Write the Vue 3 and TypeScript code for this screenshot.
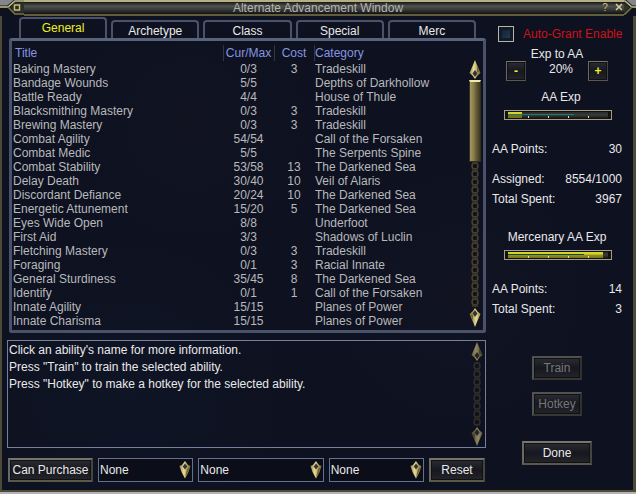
<script setup lang="ts">
import { ref } from 'vue'

interface Ability {
  title: string
  rank: string
  cost: string
  category: string
}

const tabs = ['General', 'Archetype', 'Class', 'Special', 'Merc']
const activeTab = ref('General')
const autoGrant = ref(false)
const percent = ref(20)
const filters = [
  { label: 'Ability type', size: 'narrow' },
  { label: 'Expansion', size: 'wide' },
  { label: 'Category', size: 'narrow' },
]

const abilities: Ability[] = [
  ['Baking Mastery', '0/3', '3', 'Tradeskill'],
  ['Bandage Wounds', '5/5', '', 'Depths of Darkhollow'],
  ['Battle Ready', '4/4', '', 'House of Thule'],
  ['Blacksmithing Mastery', '0/3', '3', 'Tradeskill'],
  ['Brewing Mastery', '0/3', '3', 'Tradeskill'],
  ['Combat Agility', '54/54', '', 'Call of the Forsaken'],
  ['Combat Medic', '5/5', '', 'The Serpents Spine'],
  ['Combat Stability', '53/58', '13', 'The Darkened Sea'],
  ['Delay Death', '30/40', '10', 'Veil of Alaris'],
  ['Discordant Defiance', '20/24', '10', 'The Darkened Sea'],
  ['Energetic Attunement', '15/20', '5', 'The Darkened Sea'],
  ['Eyes Wide Open', '8/8', '', 'Underfoot'],
  ['First Aid', '3/3', '', 'Shadows of Luclin'],
  ['Fletching Mastery', '0/3', '3', 'Tradeskill'],
  ['Foraging', '0/1', '3', 'Racial Innate'],
  ['General Sturdiness', '35/45', '8', 'The Darkened Sea'],
  ['Identify', '0/1', '1', 'Call of the Forsaken'],
  ['Innate Agility', '15/15', '', 'Planes of Power'],
  ['Innate Charisma', '15/15', '', 'Planes of Power'],
].map(([title, rank, cost, category]) => ({ title, rank, cost, category }))

const playerExp = { fill: 14, sub: 66 }
const mercExp = { fill: 95, sub: 76 }

function step(delta: number) {
  percent.value = Math.min(100, Math.max(0, percent.value + delta))
}
</script>

<template>
  <div class="window">
    <svg class="defs" width="0" height="0" aria-hidden="true">
      <defs>
        <linearGradient id="gold" x1="0" x2="1" y1="0" y2="0">
          <stop offset="0" stop-color="#9a8b4c" />
          <stop offset="0.4" stop-color="#e8dc9c" />
          <stop offset="0.6" stop-color="#c3b26a" />
          <stop offset="1" stop-color="#75683a" />
        </linearGradient>
        <pattern id="chain" width="12" height="8" patternUnits="userSpaceOnUse">
          <circle cx="6" cy="4" r="3" fill="none" stroke="#4b432b" stroke-width="1.4" />
          <path d="M3 0l2 1M9 0l-2 1M3 8l2-1M9 8l-2-1" stroke="#39331f" stroke-width="1.2" />
        </pattern>
        <symbol id="spear" viewBox="0 0 12 20">
          <path d="M6 0L8.500 5L12 13L9 17L6 20L3 17L0 13L3.500 5Z" fill="#15130c" />
          <path d="M6 0L8 5L11.500 13L8.500 15.500L6 19L3.500 15.500L0.500 13L4 5Z" fill="url(#gold)" />
          <path d="M6 10L8.500 13.500L6 17L3.500 13.500Z" fill="#33343a" />
          <path d="M8 6L10.500 12.500L8 12Z" fill="#6c6035" />
        </symbol>
        <symbol id="drop" viewBox="0 0 12 18">
          <path d="M6 0L9 4L12 5L10 11L6 18L2 11L0 5L3 4Z" fill="#15130c" />
          <path d="M6 0L9 4L11.500 5L9.500 11L6 17.500L2.500 11L0.500 5L3 4Z" fill="url(#gold)" />
          <path d="M6 2.500L8.300 5.500L6 8.500L3.700 5.500Z" fill="#33343a" />
          <path d="M8 8L10.500 6L9 11L6 16.500Z" fill="#6c6035" />
        </symbol>
      </defs>
    </svg>

    <header class="titlebar">
      <svg class="corner" width="24" height="16" viewBox="0 0 24 16" aria-hidden="true">
        <path d="M0 0H15L7 6H0Z" fill="#85868a" />
        <path d="M8 7L15 0H24V15H15Z" fill="#2d302c" />
        <path d="M0 7H8L15 1H24M8 7L15 14H24" fill="none" stroke="#16170f" stroke-width="3" />
        <path d="M0 7H8L15 1H24" fill="none" stroke="#c3be90" stroke-width="1.6" />
        <path d="M8 7L15 14H24" fill="none" stroke="#77744f" stroke-width="1.6" />
        <path d="M14.500 5H19.500V10H14.500Z" fill="#2a291c" stroke="#c5bb7c" stroke-width="1.500" />
      </svg>
      <h1>Alternate Advancement Window</h1>
      <div class="title-tools">
        <button type="button" aria-label="Help">?</button>
        <button type="button" aria-label="Close">
          <svg width="8" height="8" viewBox="0 0 8 8" aria-hidden="true">
            <path d="M1 1L7 7M7 1L1 7" stroke="#d6cd92" stroke-width="1.6" />
          </svg>
        </button>
      </div>
      <svg class="corner" width="12" height="16" viewBox="0 0 12 16" aria-hidden="true">
        <path d="M2 0H12V6H8Z" fill="#85868a" />
        <path d="M0 0H1L8 7L0 15Z" fill="#2d302c" />
        <path d="M0 1H1L8 7H12M8 7L1 14H0" fill="none" stroke="#16170f" stroke-width="3" />
        <path d="M0 1H1L8 7H12" fill="none" stroke="#c3be90" stroke-width="1.6" />
        <path d="M8 7L1 14H0" fill="none" stroke="#77744f" stroke-width="1.6" />
      </svg>
    </header>

    <div class="body">
      <main class="left">
        <nav class="tabs" role="tablist">
          <button
            v-for="tab in tabs"
            :key="tab"
            type="button"
            role="tab"
            class="tab"
            :class="{ active: tab === activeTab }"
            :aria-selected="tab === activeTab"
            @click="activeTab = tab"
          >{{ tab }}</button>
        </nav>

        <section class="list-panel">
          <table>
            <colgroup>
              <col />
              <col class="col-rank" />
              <col class="col-cost" />
              <col class="col-category" />
            </colgroup>
            <thead>
              <tr><th>Title</th><th>Cur/Max</th><th>Cost</th><th>Category</th></tr>
            </thead>
            <tbody>
              <tr v-for="a in abilities" :key="a.title">
                <td>{{ a.title }}</td>
                <td>{{ a.rank }}</td>
                <td>{{ a.cost }}</td>
                <td>{{ a.category }}</td>
              </tr>
            </tbody>
          </table>
          <div class="scroll list-scroll" aria-hidden="true">
            <svg width="12" height="20"><use href="#spear" /></svg>
            <div class="thumb"></div>
            <svg class="chain" width="12"><rect width="12" height="100%" fill="url(#chain)" /></svg>
            <svg class="flip" width="12" height="20"><use href="#spear" /></svg>
          </div>
        </section>

        <section class="info">
          <div class="info-text">
            <p>Click an ability's name for more information.</p>
            <p>Press "Train" to train the selected ability.</p>
            <p>Press "Hotkey" to make a hotkey for the selected ability.</p>
          </div>
          <div class="scroll dim" aria-hidden="true">
            <svg width="12" height="20"><use href="#spear" /></svg>
            <svg class="chain" width="12"><rect width="12" height="100%" fill="url(#chain)" /></svg>
            <svg class="flip" width="12" height="20"><use href="#spear" /></svg>
          </div>
        </section>

        <div class="filters">
          <button type="button" class="btn purchase">Can Purchase</button>
          <label v-for="f in filters" :key="f.label" class="combo" :class="f.size">
            <select :aria-label="f.label">
              <option>None</option>
            </select>
            <svg width="12" height="18" aria-hidden="true"><use href="#drop" /></svg>
          </label>
          <button type="button" class="btn reset">Reset</button>
        </div>
      </main>

      <aside class="right">
        <label class="auto">
          <input v-model="autoGrant" type="checkbox" />
          <span>Auto-Grant Enable</span>
        </label>

        <h2 class="ratio-title">Exp to AA</h2>
        <div class="ratio">
          <button type="button" class="btn step" aria-label="Decrease" @click="step(-10)">-</button>
          <output>{{ percent }}%</output>
          <button type="button" class="btn step" aria-label="Increase" @click="step(10)">+</button>
        </div>

        <h2 class="exp-title">AA Exp</h2>
        <div class="gauge">
          <div class="track">
            <div class="fill" :style="{ width: playerExp.fill + '%' }"></div>
            <div class="sub" :style="{ width: playerExp.sub + '%' }"></div>
            <i v-for="n in 4" :key="n" class="tick" :style="{ left: n * 20 + '%' }"></i>
          </div>
        </div>

        <dl class="stats">
          <div class="spaced"><dt>AA Points:</dt><dd>30</dd></div>
          <div><dt>Assigned:</dt><dd>8554/1000</dd></div>
          <div><dt>Total Spent:</dt><dd>3967</dd></div>
        </dl>

        <h2 class="merc-title">Mercenary AA Exp</h2>
        <div class="gauge merc">
          <div class="track">
            <div class="fill" :style="{ width: mercExp.fill + '%' }"></div>
            <div class="sub" :style="{ width: mercExp.sub + '%' }"></div>
            <i v-for="n in 4" :key="n" class="tick" :style="{ left: n * 20 + '%' }"></i>
          </div>
        </div>

        <dl class="stats">
          <div><dt>AA Points:</dt><dd>14</dd></div>
          <div><dt>Total Spent:</dt><dd>3</dd></div>
        </dl>

        <div class="actions">
          <button type="button" class="btn" disabled>Train</button>
          <button type="button" class="btn" disabled>Hotkey</button>
          <button type="button" class="btn done">Done</button>
        </div>
      </aside>
    </div>
  </div>
</template>

<style>
body {
  background: #b4b3b6;
}
</style>

<style scoped>
* {
  box-sizing: border-box;
}

.window {
  font: 12px/14px "Liberation Sans", Arial, sans-serif;
  color: #e9e9ea;
  background:
    radial-gradient(circle at 30% 25%, #1e1a2640, transparent 22%),
    radial-gradient(circle at 72% 60%, #1e1a2640, transparent 25%),
    radial-gradient(circle at 20% 80%, #17213440, transparent 25%),
    #0d1120;
}

.defs {
  display: block;
}

button,
select,
input {
  margin: 0;
  font: inherit;
  color: inherit;
}

h1,
h2,
p,
dl,
dd {
  margin: 0;
  font: inherit;
}

.titlebar {
  display: flex;
  height: 16px;
}

.corner {
  flex: none;
}

.titlebar h1 {
  flex: 1;
  padding-left: 34px;
  line-height: 12px;
  text-align: center;
  color: #b4b4b4;
}

.titlebar h1,
.title-tools {
  border-top: 2px solid #b5b084;
  border-bottom: 2px solid #5f5c40;
  background: linear-gradient(#171815, #50534f 35%, #353835 65%, #101210);
}

.title-tools {
  display: flex;
  gap: 4px;
  width: 46px;
  padding-left: 22px;
}

.title-tools button {
  display: flex;
  justify-content: center;
  width: 10px;
  padding: 1px 0 0;
  border: 0;
  background: none;
  color: #c9c08a;
  font-size: 10px;
  line-height: 9px;
}

.body {
  display: flex;
  border: solid #4d4a38;
  border-width: 0 3px 2px 2px;
}

.left {
  flex: 1;
  min-width: 0;
  padding: 1px 0 8px 5px;
}

.tabs {
  display: grid;
  grid-template-columns: repeat(5, 1fr);
  gap: 4px;
  align-items: end;
  padding: 0 10px 0 12px;
}

.tab {
  height: 18px;
  padding: 2px 0 0;
  border: 2px solid #49526a;
  border-bottom: 0;
  border-radius: 4px 4px 0 0;
  background: #0e1220;
}

.tab.active {
  height: 21px;
  padding: 0 0 1px;
  color: #f0ee20;
}

.list-panel {
  display: flex;
  margin-left: 2px;
  padding: 3px 1px 2px 0;
  border: 3px solid #49526a;
  border-top-color: #59637c;
  border-radius: 3px;
}

table {
  flex: 1;
  align-self: flex-start;
  border-collapse: collapse;
  table-layout: fixed;
  color: #b9b9bb;
}

.col-rank {
  width: 51px;
}

.col-cost {
  width: 40px;
}

.col-category {
  width: 154px;
}

th,
td {
  height: 14px;
  padding: 0 0 0 1px;
  font-weight: normal;
  text-align: left;
  white-space: nowrap;
}

th {
  height: 18px;
  color: #8595e0;
  background: linear-gradient(#34363a, #34363a) left center / 1px 16px no-repeat;
}

th:first-child {
  padding-left: 3px;
  background: none;
}

th:nth-child(n + 2):nth-child(-n + 3),
td:nth-child(n + 2):nth-child(-n + 3) {
  padding: 0;
  text-align: center;
}

.scroll {
  display: flex;
  flex-direction: column;
  align-items: center;
  width: 14px;
}

.scroll svg {
  flex: none;
}

.scroll .chain {
  flex: 1 1 0px;
  min-height: 0;
  height: 0;
}

.scroll .flip {
  transform: rotate(180deg);
}

.list-scroll {
  padding: 16px 0 1px;
}

.thumb {
  flex: none;
  width: 12px;
  height: 82px;
  border: 1px solid #34301e;
  border-top: 2px solid #eee9b0;
  background: linear-gradient(90deg, #a59a62, #857a49 40%, #686038 60%, #3e391f);
}

.dim {
  opacity: 0.6;
}

.info {
  display: flex;
  min-height: 108px;
  margin-top: 7px;
  padding: 1px;
  border: 1px solid #76809a;
}

.info-text {
  flex: 1;
  line-height: 17px;
}

.filters {
  display: flex;
  gap: 5px;
  margin-top: 10px;
  padding: 0 1px;
}

.btn {
  height: 24px;
  padding: 0;
  border: 2px solid;
  border-color: #77766c #45453f #5b5849 #6a6960;
  background: linear-gradient(#2b2b32, #17181f 50%, #24242a);
  box-shadow: inset 0 0 0 1px #101116;
  text-align: center;
}

.btn:disabled {
  color: #75777b;
  border-color: #51524e #30322f #373833 #52534f;
}

.purchase {
  width: 85px;
}

.reset {
  width: 56px;
}

.combo {
  display: grid;
  flex: 95 1 0;
}

.combo.wide {
  flex-grow: 125;
}

.combo select,
.combo svg {
  grid-area: 1 / 1;
}

.combo select {
  width: 100%;
  height: 24px;
  padding: 0 1px;
  appearance: none;
  border: 1px solid #66718c;
  border-radius: 0;
  background: #0b0e19;
}

.combo svg {
  align-self: center;
  justify-self: end;
  margin-right: 2px;
  pointer-events: none;
}

.right {
  display: flex;
  flex-direction: column;
  width: 147px;
  padding: 10px 11px 0 6px;
}

.auto {
  display: flex;
  gap: 9px;
  align-items: center;
  padding-left: 6px;
  color: #cf1218;
  white-space: nowrap;
}

.auto input {
  flex: none;
  width: 16px;
  height: 16px;
  appearance: none;
  border: 1px solid #b5b6a6;
  background: linear-gradient(135deg, #0e1a2a, #22435a);
  box-shadow: inset 0 0 0 3px #101a28;
}

h2 {
  text-align: center;
}

.ratio-title {
  margin-top: 5px;
}

.ratio {
  display: flex;
  justify-content: space-between;
  padding: 0 14px;
}

.ratio output {
  padding-left: 8px;
  line-height: 16px;
}

.step {
  width: 20px;
  height: 20px;
  border-width: 1px;
  color: #f0ee20;
  font-weight: bold;
}

.exp-title {
  margin-top: 9px;
  padding-left: 8px;
}

.gauge {
  margin: 6px 10px 0 12px;
  padding: 1px 3px;
  border: 1px solid #a59d84;
  background: #111210;
}

.track {
  position: relative;
  height: 6px;
  background: linear-gradient(#262927, #3a3d3b 50%, #171a18);
}

.fill {
  height: 6px;
  background: linear-gradient(#d5d32c 0 2px, #747216 3px);
}

.merc .fill {
  background: linear-gradient(#d5d32c 0 2px, #98951d 3px, #747216);
}

.sub {
  position: absolute;
  top: 2px;
  left: 0;
  height: 1px;
  background: #1f7a6d;
}

.merc .sub {
  background: #0e4a2c;
}

.tick {
  position: absolute;
  bottom: 0;
  width: 1px;
  height: 2px;
  background: #e4e2c8;
}

.stats {
  display: grid;
  gap: 6px;
  margin-top: 22px;
}

.stats div {
  display: flex;
  justify-content: space-between;
}

.stats .spaced {
  margin-bottom: 10px;
}

.merc-title {
  margin-top: 24px;
}

.actions {
  display: flex;
  flex-direction: column;
  gap: 12px;
  align-items: center;
  margin-top: 40px;
}

.actions .btn {
  width: 50px;
}

.actions .done {
  width: 70px;
  margin-top: 13px;
}
</style>
